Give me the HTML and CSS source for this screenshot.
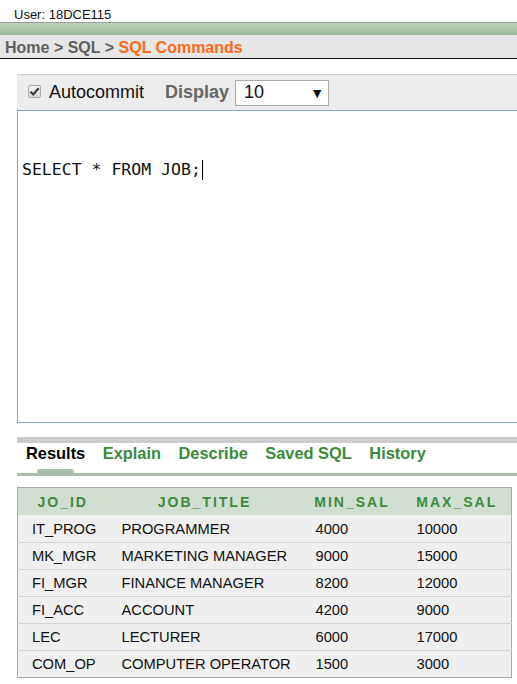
FILE: index.html
```html
<!DOCTYPE html>
<html>
<head>
<meta charset="utf-8">
<link rel="stylesheet" href="styles.css">
</head>
<body>
<div class="user">User: 18DCE115</div>
<div class="greenbar"></div>
<div class="crumbs"><span class="crumb">Home</span> &gt; <span class="crumb">SQL</span> &gt; <span class="current">SQL Commands</span></div>
<div class="main">
  <div class="toolbar">
    <span class="check"><svg width="11" height="11" viewBox="0 0 11 11"><path d="M1.5 5.8 L4.2 8.5 L9.6 2.2" fill="none" stroke="#3a3a3a" stroke-width="2.2"/></svg></span>
    <span class="label">Autocommit</span>
    <span class="display">Display</span>
    <span class="select"><span>10</span><span class="arrow">▼</span></span>
  </div>
  <div class="editor"><span class="code">SELECT * FROM JOB;</span><span class="caret"></span></div>
  <div class="graybar"></div>
  <div class="tabs">
    <span class="tab active">Results</span>
    <span class="tab">Explain</span>
    <span class="tab">Describe</span>
    <span class="tab">Saved SQL</span>
    <span class="tab">History</span>
    <span class="bump"></span>
  </div>
  <table class="results">
    <colgroup><col class="c1"><col class="c2"><col class="c3"><col class="c4"></colgroup>
    <thead>
      <tr><th>JO_ID</th><th>JOB_TITLE</th><th>MIN_SAL</th><th>MAX_SAL</th></tr>
    </thead>
    <tbody>
      <tr><td>IT_PROG</td><td>PROGRAMMER</td><td>4000</td><td>10000</td></tr>
      <tr><td>MK_MGR</td><td>MARKETING MANAGER</td><td>9000</td><td>15000</td></tr>
      <tr><td>FI_MGR</td><td>FINANCE MANAGER</td><td>8200</td><td>12000</td></tr>
      <tr><td>FI_ACC</td><td>ACCOUNT</td><td>4200</td><td>9000</td></tr>
      <tr><td>LEC</td><td>LECTURER</td><td>6000</td><td>17000</td></tr>
      <tr><td>COM_OP</td><td>COMPUTER OPERATOR</td><td>1500</td><td>3000</td></tr>
    </tbody>
  </table>
</div>
</body>
</html>
```
FILE: styles.css
```css
html, body {
  margin: 0;
  padding: 0;
  overflow: hidden;
  background: #fff;
  font-family: "Liberation Sans", Arial, sans-serif;
}
.user {
  height: 22px;
  box-sizing: border-box;
  padding: 7px 0 0 14px;
  font-size: 13px;
  line-height: 15px;
  color: #111;
}
.greenbar {
  height: 12px;
  border-top: 1px solid #9d9d9d;
  background: linear-gradient(#bad1ba, #9bb79b);
}
.crumbs {
  height: 24px;
  box-sizing: border-box;
  padding: 4px 0 0 5px;
  background: #e5e6e5;
  border-bottom: 1px solid #111;
  font-size: 16px;
  font-weight: bold;
  line-height: 18px;
  color: #5f5f5f;
}
.current { color: #ff6a13; }
.main {
  margin: 15px 0 0 17px;
}
.toolbar {
  height: 36px;
  box-sizing: border-box;
  border-top: 1px solid #cfcfcf;
  background: #ececec;
  display: flex;
  align-items: center;
  padding-left: 11px;
}
.check {
  width: 13px;
  height: 13px;
  box-sizing: border-box;
  border: 1px solid #a8a8a8;
  border-radius: 2px;
  background: linear-gradient(#f2f2f2, #d9d9d9);
  display: flex;
  align-items: center;
  justify-content: center;
  margin-top: -3px;
}
.label {
  font-size: 18px;
  color: #111;
  margin-left: 8px;
}
.display {
  font-size: 18px;
  font-weight: bold;
  color: #666;
  margin-left: 21px;
}
.select {
  margin-left: 6px;
  width: 94px;
  height: 26px;
  box-sizing: border-box;
  border: 1px solid #a9a9a9;
  background: #fff;
  display: flex;
  align-items: center;
  justify-content: space-between;
  padding: 0 4px 0 8px;
  font-size: 18px;
  color: #111;
}
.arrow { font-size: 14px; }
.editor {
  height: 313px;
  box-sizing: border-box;
  border: 1px solid #7ea6e0;
  border-right: none;
  background: #fff;
  padding: 49px 0 0 4px;
  font-family: "DejaVu Sans Mono", "Liberation Mono", monospace;
  font-size: 16.5px;
  line-height: 20px;
  color: #111;
  display: flex;
  align-items: flex-start;
}
.code { white-space: pre; }
.caret {
  width: 0;
  height: 20px;
  border-left: 1px solid #000;
  margin-left: 1px;
}
.graybar {
  margin-top: 14px;
  height: 6px;
  background: #cccccc;
}
.tabs {
  position: relative;
  height: 33px;
  box-sizing: border-box;
  border-bottom: 3px solid #a9bfa9;
  display: flex;
  gap: 17.5px;
  padding: 1px 0 0 9px;
  font-size: 16.4px;
  font-weight: bold;
  line-height: 18px;
}
.tab { color: #3c8a3c; }
.tab.active { color: #000; }
.bump {
  position: absolute;
  left: 20px;
  bottom: 0;
  width: 37px;
  height: 4px;
  background: #a9bfa9;
  border-radius: 3px 3px 0 0;
}
.results {
  margin-top: 11px;
  width: 494px;
  border-collapse: collapse;
  table-layout: fixed;
  border: 1px solid #a8a8a8;
}
.c1 { width: 90px; }
.c2 { width: 194px; }
.c3 { width: 101px; }
.c4 { width: 109px; }
.results th {
  height: 27px;
  padding: 0;
  background: #d3ded3;
  color: #3c8a3c;
  font-size: 14px;
  font-weight: bold;
  letter-spacing: 2px;
  text-align: center;
}
.results td {
  height: 26px;
  padding: 0 0 0 14px;
  background: #efefef;
  border-top: 1px solid #d2d2d2;
  font-size: 14.7px;
  color: #111;
  white-space: nowrap;
}
.results tbody tr:first-child td {
  border-top: none;
  height: 27px;
}
```
